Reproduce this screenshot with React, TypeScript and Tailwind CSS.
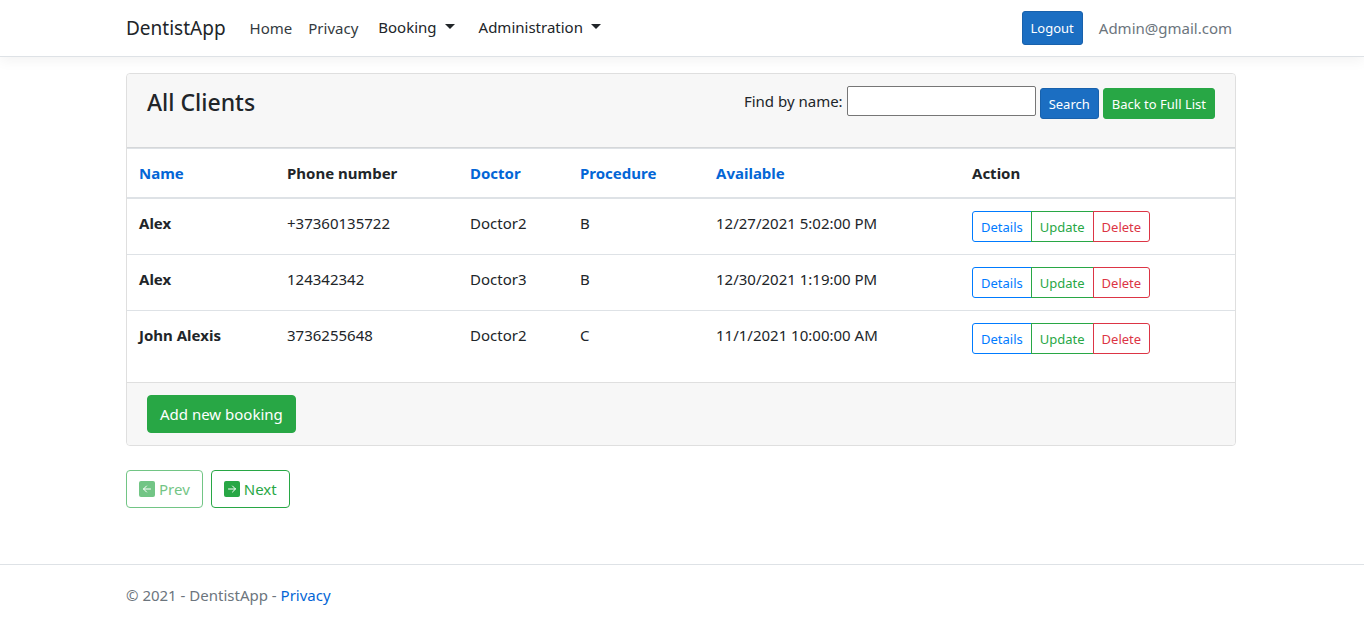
import type { ReactNode } from "react";

type Client = {
  name: string;
  phone: string;
  doctor: string;
  procedure: string;
  available: string;
};

const clients: Client[] = [
  { name: "Alex", phone: "+37360135722", doctor: "Doctor2", procedure: "B", available: "12/27/2021 5:02:00 PM" },
  { name: "Alex", phone: "124342342", doctor: "Doctor3", procedure: "B", available: "12/30/2021 1:19:00 PM" },
  { name: "John Alexis", phone: "3736255648", doctor: "Doctor2", procedure: "C", available: "11/1/2021 10:00:00 AM" },
];

function Container({ children }: { children: ReactNode }) {
  return (
    <div className="pr-0.5">
      <div className="mx-auto w-full max-w-[1110px]">{children}</div>
    </div>
  );
}

function Caret() {
  return (
    <svg width="10" height="5" viewBox="0 0 10 5" fill="currentColor" aria-hidden="true" className="mb-0.5">
      <path d="M0 0h10L5 5z" />
    </svg>
  );
}

function ArrowSquare({ direction }: { direction: "left" | "right" }) {
  return (
    <svg width="16" height="16" viewBox="0 0 16 16" aria-hidden="true">
      <rect width="16" height="16" rx="2" fill="currentColor" />
      <path
        d={direction === "left" ? "M11.5 8h-7M7.5 5l-3 3 3 3" : "M4.5 8h7M8.5 5l3 3-3 3"}
        fill="none"
        stroke="#fff"
        strokeLinecap="round"
        strokeLinejoin="round"
      />
    </svg>
  );
}

function SortHeader({ children }: { children: ReactNode }) {
  return (
    <a href="#sort" className="text-[#0366d6]">
      {children}
    </a>
  );
}

export default function App() {
  return (
    <div className="bg-white font-['Noto_Sans','Open_Sans',sans-serif] text-[15px] leading-6 text-[#212529]">
      <header className="border-b border-[#dee2e6] shadow-[0_4px_12px_rgba(0,0,0,0.05)]">
        <Container>
          <div className="flex h-14 items-center justify-between">
            <nav className="flex items-center">
              <a href="#top" className="mr-6 text-[19px]">DentistApp</a>
              <a href="#home" className="mr-4 text-[#343a40]">Home</a>
              <a href="#privacy" className="mr-5 text-[#343a40]">Privacy</a>
              <button type="button" className="mr-6 flex items-center gap-2 pb-0.5">
                Booking <Caret />
              </button>
              <button type="button" className="flex items-center gap-2 pb-0.5">
                Administration <Caret />
              </button>
            </nav>
            <div className="flex items-center gap-4 pr-1">
              <button type="button" className="h-[34px] rounded-[3px] border border-[#1861ac] bg-[#1b6ec2] px-2 text-[13px] text-white">
                Logout
              </button>
              <span className="text-[#6c757d]">Admin@gmail.com</span>
            </div>
          </div>
        </Container>
      </header>

      <main className="pt-4 pb-14">
        <Container>
          <section className="rounded border border-[#dfdfdf]">
            <div className="flex h-[74px] items-start justify-between rounded-t border-b border-[#d5d7d9] bg-[#f7f7f7] px-5 pt-3">
              <h1 className="text-[23px] leading-8 font-medium">All Clients</h1>
              <form className="flex items-start gap-1" onSubmit={(e) => e.preventDefault()}>
                <label htmlFor="client-name" className="leading-[30px]">Find by name:</label>
                <input
                  id="client-name"
                  type="text"
                  className="h-[30px] w-[189px] rounded-xs border border-[#767676] bg-white px-1"
                />
                <button type="submit" className="mt-0.5 h-[31px] rounded-[3px] border border-[#1861ac] bg-[#1b6ec2] px-2 text-[13px] text-white">
                  Search
                </button>
                <button type="button" className="mt-0.5 h-[31px] rounded-[3px] border border-[#28a745] bg-[#28a745] px-2 text-[13px] text-white">
                  Back to Full List
                </button>
              </form>
            </div>

            <table className="mb-4 w-full table-fixed border-separate border-spacing-0 text-left">
              <colgroup>
                <col className="w-[148px]" />
                <col className="w-[183px]" />
                <col className="w-[110px]" />
                <col className="w-[136px]" />
                <col className="w-[256px]" />
                <col />
              </colgroup>
              <thead>
                <tr className="[&>th]:border-t [&>th]:border-b-2 [&>th]:border-[#dee2e6] [&>th]:p-3 [&>th]:font-bold">
                  <th scope="col"><SortHeader>Name</SortHeader></th>
                  <th scope="col">Phone number</th>
                  <th scope="col"><SortHeader>Doctor</SortHeader></th>
                  <th scope="col"><SortHeader>Procedure</SortHeader></th>
                  <th scope="col"><SortHeader>Available</SortHeader></th>
                  <th scope="col">Action</th>
                </tr>
              </thead>
              <tbody>
                {clients.map((c) => (
                  <tr
                    key={c.phone}
                    className="[&>*]:border-b [&>*]:border-[#dee2e6] [&>*]:p-3 [&>*]:align-top last:[&>*]:border-b-0"
                  >
                    <th scope="row" className="font-bold">{c.name}</th>
                    <td>{c.phone}</td>
                    <td>{c.doctor}</td>
                    <td>{c.procedure}</td>
                    <td>{c.available}</td>
                    <td>
                      <div className="flex text-[13px]">
                        <a href="#details" className="flex h-[31px] items-center rounded-l-[3px] border border-[#007bff] px-2 text-[#007bff]">
                          Details
                        </a>
                        <a href="#update" className="-ml-px flex h-[31px] items-center border border-[#28a745] px-2 text-[#28a745]">
                          Update
                        </a>
                        <a href="#delete" className="-ml-px flex h-[31px] items-center rounded-r-[3px] border border-[#dc3545] px-2 text-[#dc3545]">
                          Delete
                        </a>
                      </div>
                    </td>
                  </tr>
                ))}
              </tbody>
            </table>

            <div className="rounded-b border-t border-[#dfdfdf] bg-[#f7f7f7] px-5 py-3">
              <button type="button" className="h-[38px] rounded border border-[#28a745] bg-[#28a745] px-3 text-white">
                Add new booking
              </button>
            </div>
          </section>

          <div className="mt-6 flex gap-2">
            <button
              type="button"
              disabled
              className="flex h-[38px] items-center gap-1 rounded border border-[#28a745] px-3 text-[#28a745] opacity-65"
            >
              <ArrowSquare direction="left" /> Prev
            </button>
            <button type="button" className="flex h-[38px] items-center gap-1 rounded border border-[#28a745] px-3 text-[#28a745]">
              <ArrowSquare direction="right" /> Next
            </button>
          </div>
        </Container>
      </main>

      <footer className="border-t border-[#dee2e6] py-[18px] text-[#6c757d]">
        <Container>
          © 2021 - DentistApp - <a href="#privacy" className="text-[#0366d6]">Privacy</a>
        </Container>
      </footer>
    </div>
  );
}
